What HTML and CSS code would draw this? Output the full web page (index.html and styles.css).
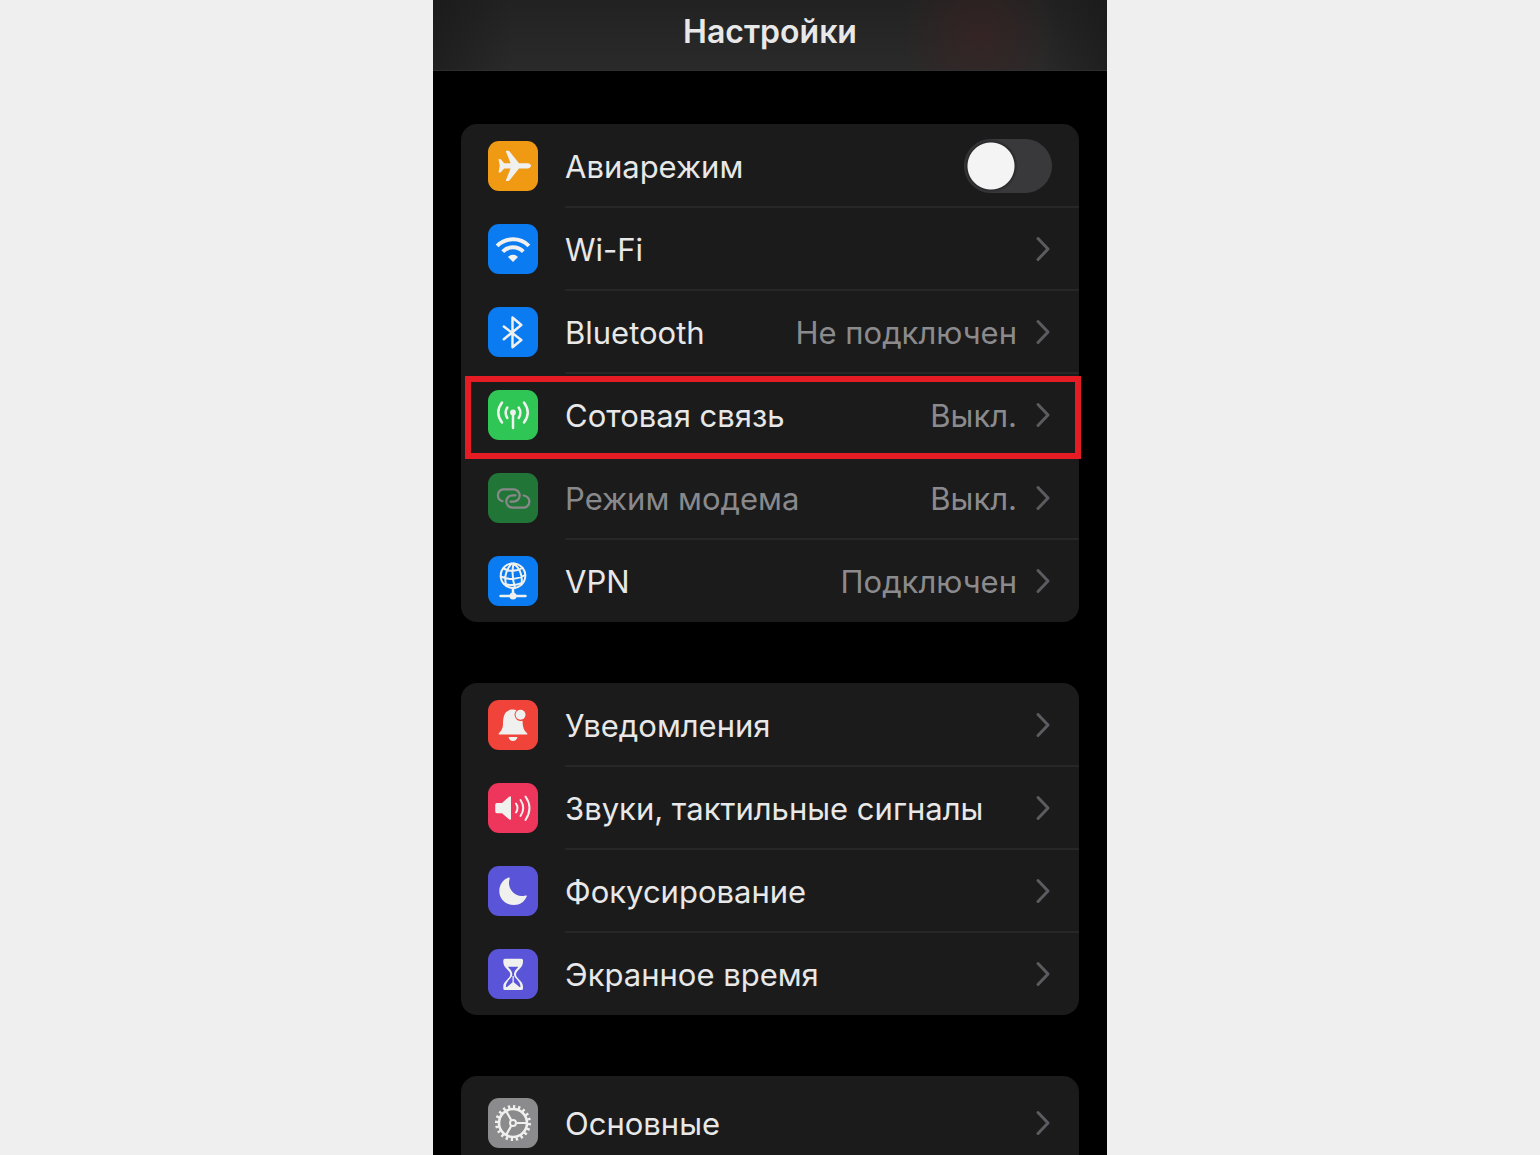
FILE: index.html
```html
<!DOCTYPE html>
<html lang="ru">
<head>
<meta charset="utf-8">
<meta name="viewport" content="width=device-width, initial-scale=1">
<title>Настройки</title>
<link rel="stylesheet" href="styles.css">
</head>
<body>
<svg class="defs" aria-hidden="true">
  <symbol id="chevron" viewBox="0 0 16 26">
    <path d="M3 2.500L13 13L3 23.500" fill="none" stroke="currentColor" stroke-width="3" stroke-linecap="round" stroke-linejoin="round"/>
  </symbol>
</svg>
<div class="phone">
  <header class="bar"><h1 class="title">Настройки</h1></header>
  <main class="content">
    <ul class="group">
      <li class="item">
        <label class="row" for="airplane">
          <svg class="icon orange" viewBox="0 0 50 50" aria-hidden="true"><path fill="currentColor" d="M31 22.200H39.500C41.600 22.200 43 23.500 43 24.800S41.600 27.400 39.500 27.400H31L21.600 39.200Q20.900 40 20 40H18.600Q17.700 40 18 39L22.600 27.400H16.200L13 31Q12.500 31.600 11.800 31.600H11.200Q10.500 31.600 10.600 30.900L11.800 24.800L10.600 18.700Q10.500 18 11.200 18H11.800Q12.500 18 13 18.600L16.200 22.200H22.600L18 10.800Q17.700 9.800 18.600 9.800H20Q20.900 9.800 21.600 10.600Z"/></svg>
          <span class="label">Авиарежим</span>
          <input class="switch" type="checkbox" role="switch" id="airplane">
        </label>
      </li>
      <li class="item">
        <a class="row" href="#wifi">
          <svg class="icon blue" viewBox="0 0 50 50" aria-hidden="true"><g fill="none" stroke="currentColor" stroke-width="4"><path d="M9.100 21.800A22.500 22.500 0 0 1 40.900 21.800"/><path d="M14.700 27.600A14.500 14.500 0 0 1 35.300 27.600"/></g><path fill="currentColor" d="M25 37.900L20 32.900A7 7 0 0 1 30 32.900Z"/></svg>
          <span class="label">Wi-Fi</span>
          <svg class="chevron" aria-hidden="true"><use href="#chevron"/></svg>
        </a>
      </li>
      <li class="item">
        <a class="row" href="#bluetooth">
          <svg class="icon blue" viewBox="0 0 50 50" aria-hidden="true"><path fill="none" stroke="currentColor" stroke-width="2.500" stroke-linejoin="round" stroke-linecap="round" d="M15.800 19.500L33.300 33L24.500 40.200V10.500L33.300 18L15.800 32.200"/></svg>
          <span class="label">Bluetooth</span>
          <span class="value">Не подключен</span>
          <svg class="chevron" aria-hidden="true"><use href="#chevron"/></svg>
        </a>
      </li>
      <li class="item marked">
        <a class="row" href="#cellular">
          <svg class="icon green" viewBox="0 0 50 50" aria-hidden="true"><circle cx="25" cy="22.500" r="2.900" fill="currentColor"/><g fill="none" stroke="currentColor" stroke-width="2.500" stroke-linecap="round"><path d="M25 23V38"/><path d="M19.300 17.500Q16 22.700 19.300 28M30.700 17.500Q34 22.700 30.700 28M14 12.500Q6.500 22.500 14 32.500M36 12.500Q43.500 22.500 36 32.500"/></g></svg>
          <span class="label">Сотовая связь</span>
          <span class="value">Выкл.</span>
          <svg class="chevron" aria-hidden="true"><use href="#chevron"/></svg>
        </a>
      </li>
      <li class="item">
        <a class="row disabled" href="#hotspot">
          <svg class="icon dim-green" viewBox="0 0 50 50" aria-hidden="true"><path fill="none" stroke="currentColor" stroke-width="2.200" stroke-linecap="round" d="M14.500 28.200A6.100 6.100 0 0 1 15 16.300H25.500A6.200 6.200 0 0 1 25.500 28.700H22.500M35.500 22.500A6.100 6.100 0 0 1 35 34.700H24.500A6.200 6.200 0 0 1 24.500 22.300H27.500"/></svg>
          <span class="label">Режим модема</span>
          <span class="value">Выкл.</span>
          <svg class="chevron" aria-hidden="true"><use href="#chevron"/></svg>
        </a>
      </li>
      <li class="item">
        <a class="row" href="#vpn">
          <svg class="icon blue" viewBox="0 0 50 50" aria-hidden="true"><g fill="none" stroke="currentColor" stroke-width="2" stroke-linecap="round"><circle cx="25" cy="19.700" r="12.300"/><path d="M23.500 7.500Q14.500 18 18.500 30.200M25.500 7.500Q23 19 27 32M26 7.500Q35.500 16 33.500 28.500M15.500 12.500Q25 17.500 34.500 12M12.800 20.500Q25 26 37.200 19M16 28Q26 30.500 34 27"/><path d="M25 32V38M12.500 40H37.500" stroke-width="2.500"/></g><circle cx="25" cy="40" r="3.500" fill="currentColor"/></svg>
          <span class="label">VPN</span>
          <span class="value">Подключен</span>
          <svg class="chevron" aria-hidden="true"><use href="#chevron"/></svg>
        </a>
      </li>
    </ul>
    <ul class="group">
      <li class="item">
        <a class="row" href="#notifications">
          <svg class="icon red" viewBox="0 0 50 50" aria-hidden="true"><path fill="currentColor" d="M10.700 34.500V33.500Q15 29.500 15 24C15 15.500 17 9.600 25 9.600Q27 9.600 28.500 10.300A6.200 6.200 0 0 0 34.500 20.700Q34.500 30 39.300 33.500V34.500ZM20.500 37H29.500Q28.500 41 25 41T20.500 37Z"/><circle cx="32.500" cy="14.700" r="5" fill="currentColor"/></svg>
          <span class="label">Уведомления</span>
          <svg class="chevron" aria-hidden="true"><use href="#chevron"/></svg>
        </a>
      </li>
      <li class="item">
        <a class="row" href="#sounds">
          <svg class="icon pink" viewBox="0 0 50 50" aria-hidden="true"><path fill="currentColor" d="M9 20H14L21 13.800Q23 12.500 23 14.500V35.500Q23 37.800 21 36.200L14 30.300H9Q7.200 30.300 7.200 28.500V21.800Q7.200 20 9 20Z"/><path fill="none" stroke="currentColor" stroke-width="2" stroke-linecap="round" d="M28 20.500Q31 25 28 29.500M32.500 17Q38 25 32.500 33M37.500 13.500Q45.500 25 37.500 37"/></svg>
          <span class="label">Звуки, тактильные сигналы</span>
          <svg class="chevron" aria-hidden="true"><use href="#chevron"/></svg>
        </a>
      </li>
      <li class="item">
        <a class="row" href="#focus">
          <svg class="icon indigo" viewBox="0 0 50 50" aria-hidden="true"><path fill="currentColor" d="M20.500 11.500Q22 11 21.700 12.500C18.500 21.500 26 32.500 37.500 29.500Q39.300 29 38.700 30.500C36.500 35.500 32 39 26 39C17.500 39 11.300 33 11.300 25C11.300 19 15 13.500 20.500 11.500Z"/></svg>
          <span class="label">Фокусирование</span>
          <svg class="chevron" aria-hidden="true"><use href="#chevron"/></svg>
        </a>
      </li>
      <li class="item">
        <a class="row" href="#screen-time">
          <svg class="icon indigo" viewBox="0 0 50 50" aria-hidden="true"><path fill="currentColor" fill-rule="evenodd" d="M17 9.800H33.500Q35 9.800 35 11.300V13C35 19 28 21.500 28 25.500S35 32 35 37.500V39.500Q35 41 33.500 41H16.800Q15.300 41 15.300 39.500V37.500C15.300 32 22.300 29.500 22.300 25.500S15.300 19 15.300 13V11.300Q15.300 9.800 17 9.800ZM20 17.700C21 19.500 24.300 21.500 24.300 25.500S17.800 31.500 17.800 38H19L24.500 33.300V27H25.800V33.300L31.500 38H32.500C32.500 31.500 26 29.500 26 25.500S29.300 19.500 30.300 17.700Z"/></svg>
          <span class="label">Экранное время</span>
          <svg class="chevron" aria-hidden="true"><use href="#chevron"/></svg>
        </a>
      </li>
    </ul>
    <ul class="group roomy">
      <li class="item">
        <a class="row" href="#general">
          <svg class="icon gray" viewBox="0 0 50 50" aria-hidden="true"><g fill="none" stroke="currentColor"><circle cx="25" cy="25" r="14" stroke-width="2.600"/><circle cx="25" cy="25" r="16.300" stroke-width="3.400" pathLength="80" stroke-dasharray="1.800 2.200"/><circle cx="25" cy="25" r="3" stroke-width="2"/><path stroke-width="2.200" d="M28.500 25H39M23.200 22L18 13M23.200 28L18 37"/></g></svg>
          <span class="label">Основные</span>
          <svg class="chevron" aria-hidden="true"><use href="#chevron"/></svg>
        </a>
      </li>
    </ul>
  </main>
</div>
</body>
</html>
```
FILE: styles.css
```css
* {
  box-sizing: border-box;
}

body {
  margin: 0;
  background: #efefef;
  color: #e8e8e8;
  font-family: Inter, "Noto Sans", sans-serif;
  font-size: 31px;
  line-height: 40px;
}

.defs {
  display: none;
}

.phone {
  display: flex;
  flex-direction: column;
  max-width: 674px;
  height: 100vh;
  margin: 0 auto;
  background: #000;
}

.bar {
  flex: none;
  padding: 12px 28px 18px;
  border-bottom: 1px solid #2e2e2e;
  background:
    radial-gradient(ellipse 80px 90px at 81% 50%, rgba(66, 34, 34, 0.5), rgba(66, 34, 34, 0)),
    linear-gradient(90deg, rgba(20, 20, 20, 0.5), rgba(20, 20, 20, 0) 12%, rgba(20, 20, 20, 0) 90%, rgba(20, 20, 20, 0.5)),
    linear-gradient(#222, #2a2a2a);
}

.title {
  margin: 0;
  font-size: 32px;
  font-weight: 600;
  text-align: center;
}

.content {
  display: flex;
  flex: 1;
  flex-direction: column;
  gap: 61px;
  padding: 53px 28px;
  overflow-y: auto;
  scrollbar-width: none;
}

.group {
  flex: none;
  margin: 0;
  padding: 0;
  border-radius: 16px;
  background: #1b1b1c;
  list-style: none;
}

.roomy {
  padding: 5px 0;
}

.item {
  position: relative;
}

.item + .item::before {
  content: "";
  position: absolute;
  top: -1px;
  right: 0;
  left: 104px;
  height: 2px;
  background: #272728;
}

.marked::after {
  content: "";
  position: absolute;
  inset: 3px -2px -3px 4px;
  z-index: 1;
  border: 6px solid #e51c23;
  pointer-events: none;
}

.row {
  display: flex;
  align-items: center;
  min-height: 83px;
  padding: 0 27px;
  color: inherit;
  text-decoration: none;
}

.icon {
  flex: none;
  width: 50px;
  height: 50px;
  margin-right: 27px;
  border-radius: 11px;
  color: #f0f0ee;
}

.orange { background: #f09a14; }
.blue { background: #0a7bf0; }
.green { background: #2fc655; }
.dim-green { background: #217536; }
.red { background: #f0443a; }
.pink { background: #ee355c; }
.indigo { background: #5a55d8; }
.gray { background: #8b8b8d; }

.label,
.value {
  padding-top: 2px;
}

.label {
  flex: 1;
}

.value {
  color: #8b8b8e;
}

.disabled,
.disabled .icon {
  color: #89898c;
}

.chevron {
  flex: none;
  width: 16px;
  height: 26px;
  margin: 0 1px 0 18px;
  color: #5c5c60;
}

.switch {
  flex: none;
  width: 88px;
  height: 54px;
  margin: 0;
  border-radius: 27px;
  appearance: none;
  background: radial-gradient(circle at 27px 27px, #f4f4f4 23px, #2a2a2c 24px, #39393c 27px);
}

.switch:checked {
  background: radial-gradient(circle at 61px 27px, #f4f4f4 23px, #2fc655 24px);
}
```
